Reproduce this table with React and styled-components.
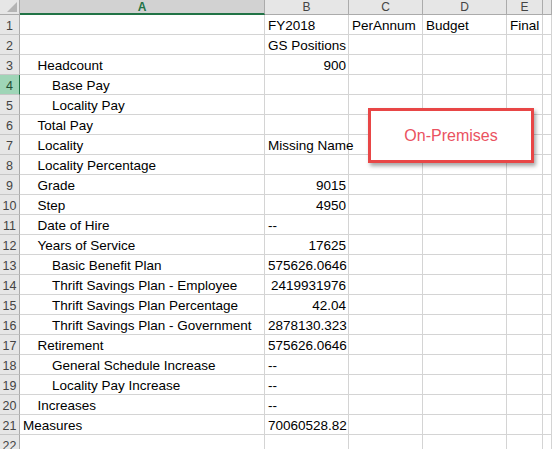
import React from "react"
import styled, { createGlobalStyle } from "styled-components"

const columns = ["A", "B", "C", "D", "E", ""]

// label, indent level, value in column B, alignment of that value
const rows = [
  { label: "", indent: 0, b: "FY2018", bAlign: "left", c: "PerAnnum", d: "Budget", e: "Final" },
  { label: "", indent: 0, b: "GS Positions", bAlign: "left" },
  { label: "Headcount", indent: 1, b: "900", bAlign: "right" },
  { label: "Base Pay", indent: 2 },
  { label: "Locality Pay", indent: 2 },
  { label: "Total Pay", indent: 1 },
  { label: "Locality", indent: 1, b: "Missing Name", bAlign: "left" },
  { label: "Locality Percentage", indent: 1 },
  { label: "Grade", indent: 1, b: "9015", bAlign: "right" },
  { label: "Step", indent: 1, b: "4950", bAlign: "right" },
  { label: "Date of Hire", indent: 1, b: "--", bAlign: "left" },
  { label: "Years of Service", indent: 1, b: "17625", bAlign: "right" },
  { label: "Basic Benefit Plan", indent: 2, b: "575626.0646", bAlign: "right" },
  { label: "Thrift Savings Plan - Employee", indent: 2, b: "2419931976", bAlign: "right" },
  { label: "Thrift Savings Plan Percentage", indent: 2, b: "42.04", bAlign: "right" },
  { label: "Thrift Savings Plan - Government", indent: 2, b: "2878130.323", bAlign: "right" },
  { label: "Retirement", indent: 1, b: "575626.0646", bAlign: "right" },
  { label: "General Schedule Increase", indent: 2, b: "--", bAlign: "left" },
  { label: "Locality Pay Increase", indent: 2, b: "--", bAlign: "left" },
  { label: "Increases", indent: 1, b: "--", bAlign: "left" },
  { label: "Measures", indent: 0, b: "70060528.82", bAlign: "right" },
  { label: "", indent: 0 },
]

const SELECTED_ROW = 4

export default function App() {
  return (
    <>
      <GlobalStyle />
      <Sheet>
        <Corner>
          <CornerTriangle />
        </Corner>
        {columns.map((col, i) => (
          <ColumnHeader key={i} $selected={col === "A"}>{col}</ColumnHeader>
        ))}

        {rows.map((row, i) => (
          <React.Fragment key={i}>
            <RowHeader $selected={i + 1 === SELECTED_ROW}>{i + 1}</RowHeader>
            <Cell $indent={row.indent}>{row.label}</Cell>
            <Cell $align={row.bAlign}>{row.b}</Cell>
            <Cell>{row.c}</Cell>
            <Cell>{row.d}</Cell>
            <Cell>{row.e}</Cell>
            <Cell />
          </React.Fragment>
        ))}

        <TextBox>On-Premises</TextBox>
      </Sheet>
    </>
  )
}

const GlobalStyle = createGlobalStyle`
  html, body {
    margin: 0;
    padding: 0;
    background: #ffffff;
    overflow: hidden;
  }
  body {
    font-family: "Liberation Sans", Arial, sans-serif;
  }
`

const Sheet = styled.div`
  position: relative;
  display: grid;
  grid-template-columns: 20px 245px 84px 74px 84px 36px 1fr;
  grid-template-rows: 15px;
  grid-auto-rows: 20px;
  width: 552px;
  height: 449px;
  overflow: hidden;
  background: #ffffff;
`

const Corner = styled.div`
  position: relative;
  box-sizing: border-box;
  background: #e6e6e6;
  border-right: 1px solid #ababab;
  border-bottom: 1px solid #ababab;
`

const CornerTriangle = styled.div`
  position: absolute;
  right: 2px;
  bottom: 2px;
  width: 0;
  height: 0;
  border-left: 10px solid transparent;
  border-bottom: 10px solid #b4b4b4;
`

const ColumnHeader = styled.div`
  box-sizing: border-box;
  display: flex;
  align-items: center;
  justify-content: center;
  background: ${(p) => (p.$selected ? "#d2d2d2" : "#e6e6e6")};
  color: ${(p) => (p.$selected ? "#217346" : "#444444")};
  font-weight: ${(p) => (p.$selected ? "bold" : "normal")};
  font-size: 12px;
  border-right: 1px solid #ababab;
  border-bottom: ${(p) => (p.$selected ? "2px solid #217346" : "1px solid #ababab")};
  padding-top: ${(p) => (p.$selected ? "1px" : "0")};
`

const RowHeader = styled.div`
  box-sizing: border-box;
  display: flex;
  align-items: center;
  justify-content: center;
  background: ${(p) => (p.$selected ? "#9fd5b7" : "#e6e6e6")};
  color: ${(p) => (p.$selected ? "#1e4e33" : "#444444")};
  font-size: 12.5px;
  border-right: 1px solid ${(p) => (p.$selected ? "#217346" : "#ababab")};
  border-bottom: 1px solid #c6c6c6;
  padding-top: 2px;
`

const Cell = styled.div`
  box-sizing: border-box;
  border-right: 1px solid #d4d4d4;
  border-bottom: 1px solid #d4d4d4;
  font-size: 13.5px;
  line-height: 19px;
  color: #000000;
  white-space: nowrap;
  overflow: visible;
  text-align: ${(p) => p.$align || "left"};
  padding: 1px ${(p) => (p.$align === "right" ? "2px" : "3px")} 0
    ${(p) => 3 + (p.$indent || 0) * 14.5}px;
`

const TextBox = styled.div`
  position: absolute;
  left: 368px;
  top: 108px;
  width: 166px;
  height: 55px;
  box-sizing: border-box;
  display: flex;
  align-items: center;
  justify-content: center;
  background: #ffffff;
  border: 3px solid #e84646;
  box-shadow: 2px 3px 4px rgba(0, 0, 0, 0.35);
  color: #ea5260;
  font-family: "Liberation Sans", Arial, sans-serif;
  font-size: 16px;
`
